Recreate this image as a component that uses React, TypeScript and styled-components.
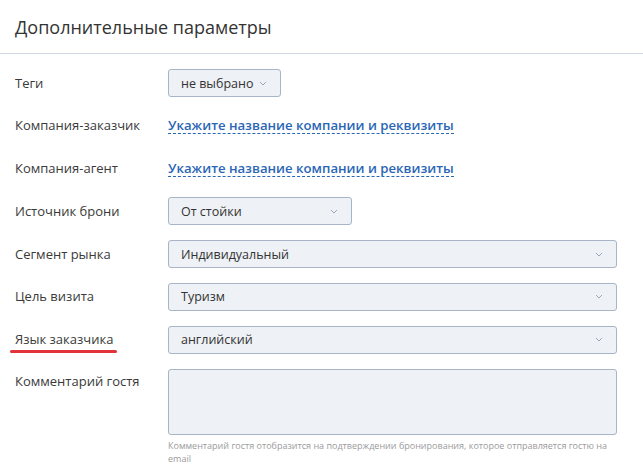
import styled, { createGlobalStyle } from 'styled-components';

const GlobalStyle = createGlobalStyle`
  body {
    margin: 0;
    background: #fff;
    font-family: 'Open Sans', 'Noto Sans', sans-serif;
    color: #333;
  }
`;

type Field =
  | { label: string; kind: 'select'; value: string; width?: number }
  | { label: string; kind: 'link'; value: string };

const fields: Field[] = [
  { label: 'Теги', kind: 'select', value: 'не выбрано', width: 113 },
  { label: 'Компания-заказчик', kind: 'link', value: 'Укажите название компании и реквизиты' },
  { label: 'Компания-агент', kind: 'link', value: 'Укажите название компании и реквизиты' },
  { label: 'Источник брони', kind: 'select', value: 'От стойки', width: 184 },
  { label: 'Сегмент рынка', kind: 'select', value: 'Индивидуальный' },
  { label: 'Цель визита', kind: 'select', value: 'Туризм' },
  { label: 'Язык заказчика', kind: 'select', value: 'английский' },
];

const Chevron = () => (
  <svg width="8" height="5" viewBox="0 0 8 5" fill="none">
    <path d="M1 1l3 3 3-3" stroke="#9aa8bb" strokeWidth="1" />
  </svg>
);

const App = () => {
  return (
    <Page>
      <GlobalStyle />
      <Header>
        <Title>Дополнительные параметры</Title>
      </Header>
      <Form>
        {fields.map((f) => (
          <Row key={f.label}>
            <Label $marked={f.label === 'Язык заказчика'}>{f.label}</Label>
            {f.kind === 'select' ? (
              <Select $width={f.width}>
                <span>{f.value}</span>
                <Chevron />
              </Select>
            ) : (
              <LinkWrap>
                <DashedLink>{f.value}</DashedLink>
              </LinkWrap>
            )}
          </Row>
        ))}
        <Row $top>
          <Label $top>Комментарий гостя</Label>
          <Control>
            <TextArea />
            <Hint>
              Комментарий гостя отобразится на подтверждении бронирования, которое отправляется гостю на
              email
            </Hint>
          </Control>
        </Row>
      </Form>
    </Page>
  );
};

export default App;

const Page = styled.div`
  width: 643px;
`;

const Header = styled.div`
  height: 53px;
  display: flex;
  align-items: center;
  padding: 0 15px;
  border-bottom: 1px solid #cdd5df;
`;

const Title = styled.h1`
  margin: 0;
  font-size: 18px;
  font-weight: 400;
  color: #333;
`;

const Form = styled.div`
  display: flex;
  flex-direction: column;
  gap: 14.8px;
  padding: 15px 26px 0 15px;
`;

const Row = styled.div<{ $top?: boolean }>`
  display: grid;
  grid-template-columns: 153px 1fr;
  align-items: ${(p) => (p.$top ? 'start' : 'center')};
  height: ${(p) => (p.$top ? 'auto' : '28px')};
`;

const Label = styled.div<{ $marked?: boolean; $top?: boolean }>`
  position: relative;
  justify-self: start;
  font-size: 13px;
  line-height: 18px;
  color: #3a3a3a;
  margin-top: ${(p) => (p.$top ? '3px' : '-1px')};
  ${(p) =>
    p.$marked &&
    `
    &::after {
      content: '';
      position: absolute;
      left: -5px;
      right: -4px;
      bottom: -5px;
      height: 3px;
      border-radius: 2px;
      background: #e2333a;
    }
  `}
`;

const Select = styled.div<{ $width?: number }>`
  box-sizing: border-box;
  width: ${(p) => (p.$width ? `${p.$width}px` : '100%')};
  height: 28px;
  display: flex;
  align-items: center;
  justify-content: space-between;
  padding: 0 13px 0 12px;
  background: #eef1f5;
  border: 1px solid #a8b5c7;
  border-radius: 3px;
  font-size: 12.5px;
  color: #333;
  span {
    white-space: nowrap;
  }
`;

const LinkWrap = styled.div`
  display: flex;
  align-items: center;
  height: 28px;
`;

const DashedLink = styled.a`
  font-size: 13.2px;
  font-weight: 600;
  color: #2a66b6;
  line-height: 16px;
  border-bottom: 1px dashed #2a66b6;
  cursor: pointer;
`;

const Control = styled.div`
  display: flex;
  flex-direction: column;
`;

const TextArea = styled.div`
  box-sizing: border-box;
  height: 66px;
  background: #eef1f5;
  border: 1px solid #a8b5c7;
  border-radius: 3px;
`;

const Hint = styled.div`
  margin-top: 4px;
  font-size: 9px;
  line-height: 13px;
  color: #9b9b9b;
`;
